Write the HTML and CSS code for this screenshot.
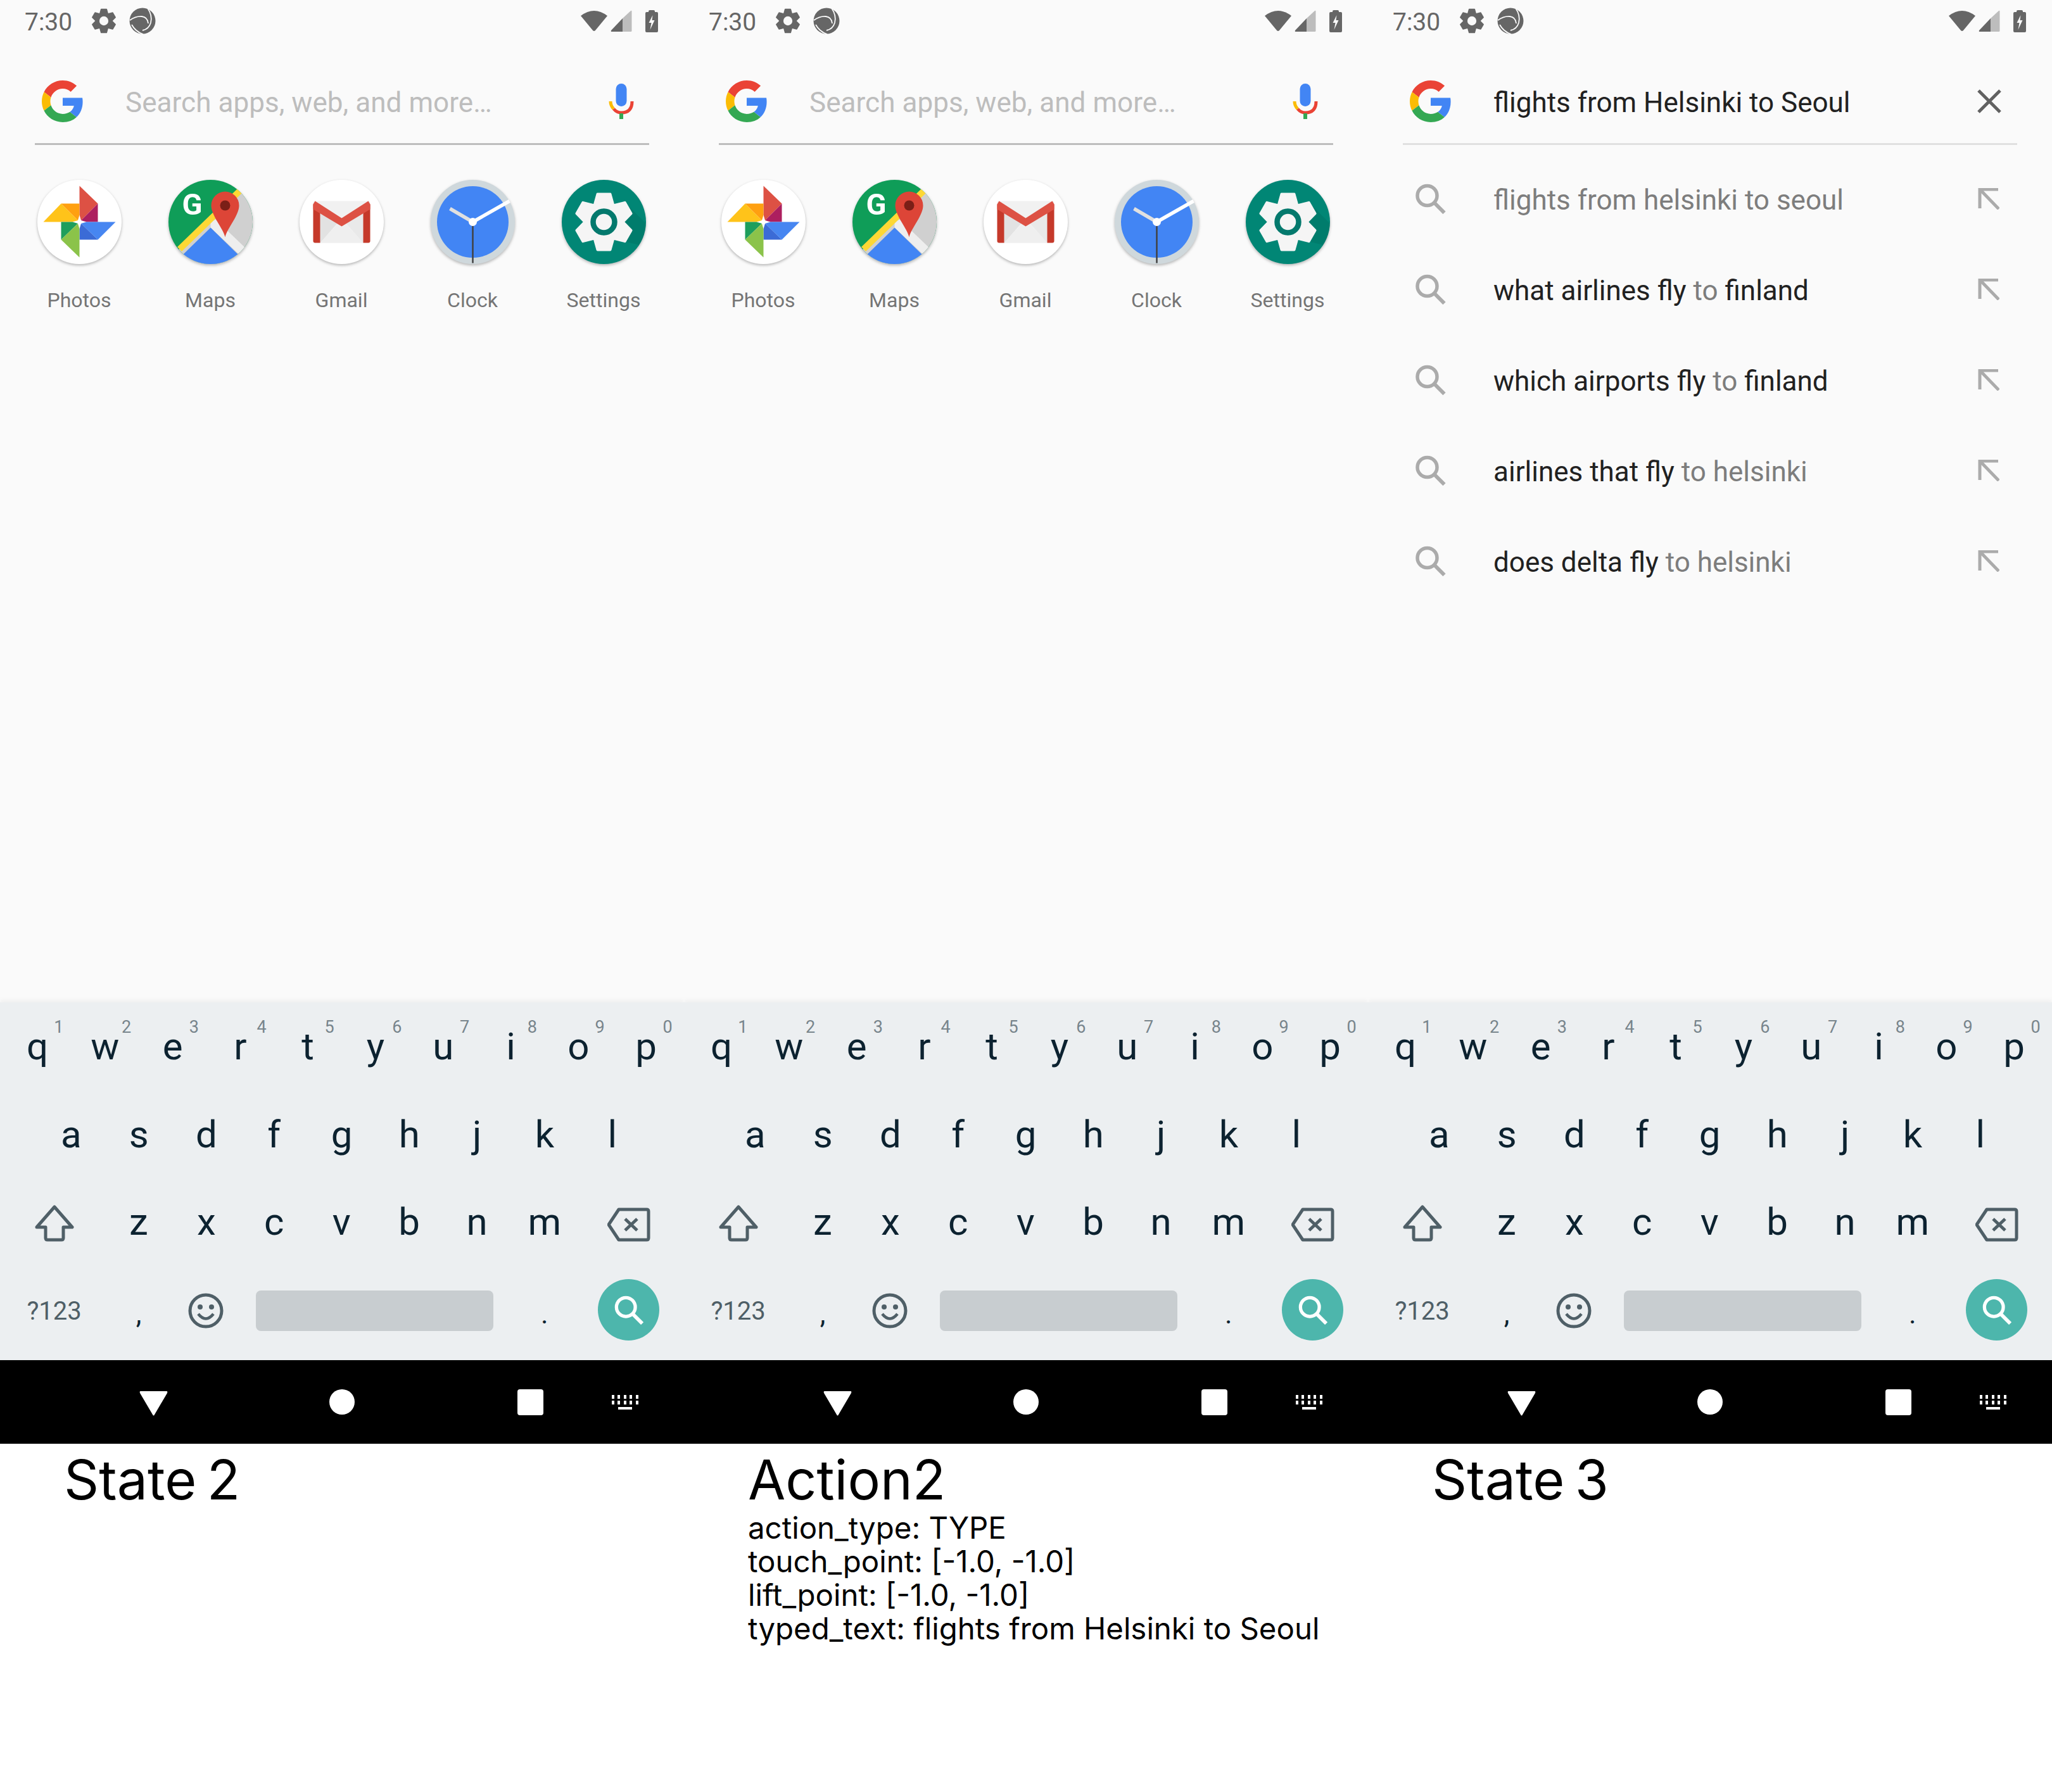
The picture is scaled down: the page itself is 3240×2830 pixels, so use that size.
FILE: index.html
```html
<!DOCTYPE html>
<html lang="en">
<head>
<meta charset="utf-8">
<title>State 2, Action2, State 3</title>
<link rel="stylesheet" href="styles.css">
</head>
<body>
<svg class="sprite" width="0" height="0" aria-hidden="true">
  <defs>
    <clipPath id="clip-app"><circle cx="0" cy="0" r="66.5"/></clipPath>
    <polygon id="tooth" points="-10,-44 10,-44 15,-26 -15,-26"/>
    <symbol id="i-cog" viewBox="-50 -50 100 100">
      <g fill="currentColor" stroke="currentColor" stroke-width="4" stroke-linejoin="round">
        <use href="#tooth"/><use href="#tooth" transform="rotate(60)"/><use href="#tooth" transform="rotate(120)"/><use href="#tooth" transform="rotate(180)"/><use href="#tooth" transform="rotate(240)"/><use href="#tooth" transform="rotate(300)"/>
      </g>
      <circle r="32" fill="currentColor"/>
    </symbol>
    <symbol id="i-google" viewBox="0 0 48 48">
      <path fill="#EA4335" d="M24 9.5c3.54 0 6.71 1.22 9.21 3.6l6.85-6.85C35.9 2.38 30.47 0 24 0 14.62 0 6.51 5.38 2.56 13.22l7.98 6.19C12.43 13.72 17.74 9.5 24 9.5z"/>
      <path fill="#4285F4" d="M46.98 24.55c0-1.57-.15-3.09-.38-4.55H24v9.02h12.94c-.58 2.96-2.26 5.48-4.78 7.18l7.73 6c4.51-4.18 7.09-10.36 7.09-17.65z"/>
      <path fill="#FBBC05" d="M10.53 28.59c-.48-1.45-.76-2.99-.76-4.59s.27-3.14.76-4.59l-7.98-6.19C.92 16.46 0 20.12 0 24c0 3.88.92 7.54 2.56 10.78l7.97-6.19z"/>
      <path fill="#34A853" d="M24 48c6.48 0 11.93-2.13 15.89-5.81l-7.73-6c-2.15 1.45-4.92 2.3-8.16 2.3-6.26 0-11.57-4.22-13.47-9.91l-7.98 6.19C6.51 42.62 14.62 48 24 48z"/>
    </symbol>
    <symbol id="i-status-gear" viewBox="-50 -50 100 100">
      <use href="#i-cog" x="-50" y="-50" width="100" height="100" color="#666666"/>
      <circle r="17" fill="#fafafa"/>
    </symbol>
    <symbol id="i-disc" viewBox="-21 -21 42 42">
      <circle r="20.5" fill="#666666"/>
      <g fill="none" stroke="#fafafa" stroke-width="1.8">
        <path d="M-20 -1 Q-10 -8 -1 -7 Q8 -6 9 4"/>
        <path d="M8 -20 Q16 -9 13 3 Q10 13 0 15"/>
        <path d="M-17 6 Q-11 17 1 21"/>
      </g>
    </symbol>
    <symbol id="i-wifi" viewBox="0 0 44 34"><path fill="#666666" d="M1 9 Q22 -7 43 9 L24 32 Q22 34 20 32 Z"/></symbol>
    <symbol id="i-signal" viewBox="0 0 34 34">
      <path fill="#bdbdbd" d="M19 13 L32 1 Q33.500 0 33.500 2 V33 Q33.500 34 32 34 H19 Z"/>
      <path fill="#666666" d="M19 13 V34 H2 Q0 34 1 32 Z"/>
    </symbol>
    <symbol id="i-battery" viewBox="0 0 20 35">
      <path fill="#666666" d="M5 2 Q5 0 7 0 H13 Q15 0 15 2 V3 H18 Q20 3 20 5 V33 Q20 35 18 35 H2 Q0 35 0 33 V5 Q0 3 2 3 H5 Z"/>
      <path fill="#fafafa" d="M11.500 8 L5.500 20 H9.500 L7.500 31 L14.500 16 H10.500 Z"/>
    </symbol>
    <symbol id="i-mic" viewBox="0 0 40 56">
      <rect x="11.500" y="0" width="17" height="36" rx="8.500" fill="#4285f4"/>
      <path d="M3 28 Q3 35 8 40" fill="none" stroke="#fbbc05" stroke-width="5"/>
      <path d="M8 40 Q13 46 20 46 Q37 46 37 28" fill="none" stroke="#ea4335" stroke-width="5"/>
      <rect x="17" y="47" width="6" height="9" fill="#34a853"/>
    </symbol>
    <symbol id="i-photos" viewBox="-66.500 -66.500 133 133">
      <circle r="66.500" fill="#ffffff"/>
      <polygon points="0,-57 29,-29 0,0" fill="#dd5144"/>
      <polygon points="29,-29 29,0 0,0" fill="#ad1f5f"/>
      <polygon points="-57,0 -29,-29 0,0" fill="#ffc31a"/>
      <polygon points="-29,-29 0,-29 0,0" fill="#ffa010"/>
      <polygon points="0,0 57,0 29,28" fill="#4786f1"/>
      <polygon points="0,0 29,28 0,28" fill="#3b6bd6"/>
      <polygon points="-29,0 0,0 -29,28" fill="#1e9e5c"/>
      <polygon points="0,0 0,56 -29,28" fill="#8bc34a"/>
      <polygon points="0,-11 2.500,-2.500 11,0 2.500,2.500 0,11 -2.500,2.500 -11,0 -2.500,-2.500" fill="#ffffff"/>
    </symbol>
    <symbol id="i-maps" viewBox="-66.500 -66.500 133 133">
      <g clip-path="url(#clip-app)">
        <rect x="-70" y="-70" width="140" height="140" fill="#0f9d58"/>
        <polygon points="-52,45 50,-52 70,-52 70,70 -52,70" fill="#d0d0d0"/>
        <polygon points="0,0 0,9 49,55 58,44 8,-4" fill="#eeeeee"/>
        <polygon points="0,9 43,51 43,70 -50,70 -43,51" fill="#4285f4"/>
        <path d="M-49 43 L47 -50" stroke="#fdd835" stroke-width="10" fill="none"/>
      </g>
      <text class="maps-g" x="-29" y="-11.500" text-anchor="middle">G</text>
      <path fill="#dd4537" d="M23 24 C20 10 1 -10 1 -26 A22 22 0 1 1 45 -26 C45 -10 26 10 23 24Z"/>
      <circle cx="23" cy="-26" r="8" fill="#7b1f17"/>
    </symbol>
    <symbol id="i-gmail" viewBox="-66.500 -66.500 133 133">
      <circle r="66.500" fill="#ffffff"/>
      <rect x="-45" y="-33" width="90" height="66" rx="3" fill="#f1f1f1"/>
      <polygon points="-34,-18 -34,33 0,-6" fill="#e2e2e2"/>
      <polygon points="34,-18 34,33 0,-6" fill="#e9e9e9"/>
      <polygon points="-34,33 0,-2 34,33" fill="#efefef"/>
      <path fill="#c5392a" d="M-45 -28 L-34 -20 V33 H-42 Q-45 33 -45 30 Z"/>
      <path fill="#c5392a" d="M45 -28 L34 -20 V33 H42 Q45 33 45 30 Z"/>
      <polygon points="-42,-33 0,-6 42,-33 45,-28 45,-20 0,7 -45,-20 -45,-28" fill="#dd5144"/>
    </symbol>
    <symbol id="i-clock" viewBox="-66.500 -66.500 133 133">
      <circle r="66.500" fill="#cfd8dc"/>
      <circle r="56.500" fill="#4285f4"/>
      <path d="M0 0 L-36 -21" stroke="#e0e0e0" stroke-width="5.500"/>
      <path d="M0 0 L58 -33" stroke="#ffffff" stroke-width="5.500"/>
      <path d="M0 0 V65" stroke="#424242" stroke-width="2.500"/>
      <circle r="6.500" fill="#ffffff"/>
    </symbol>
    <symbol id="i-settings" viewBox="-66.500 -66.500 133 133">
      <circle r="66.500" fill="#018675"/>
      <g clip-path="url(#clip-app)"><polygon points="36,-28 70,6 70,40 30,30" fill="#00000012"/></g>
      <use href="#i-cog" x="-50" y="-50" width="100" height="100" color="#f5f5f5"/>
      <circle r="17" fill="#f5f5f5" stroke="#04796d" stroke-width="8.500"/>
    </symbol>
    <symbol id="i-glass" viewBox="0 0 48 48">
      <circle cx="19" cy="19" r="15.500" fill="none" stroke="currentColor" stroke-width="5.500"/>
      <path d="M30 30 L46 46" fill="none" stroke="currentColor" stroke-width="6"/>
    </symbol>
    <symbol id="i-arrow" viewBox="0 0 34 34">
      <path d="M32 2 H3 V32 M3 2 L33 33" fill="none" stroke="#ababab" stroke-width="5"/>
    </symbol>
    <symbol id="i-close" viewBox="0 0 38 38">
      <path d="M2 2 L36 36 M36 2 L2 36" fill="none" stroke="#616161" stroke-width="5"/>
    </symbol>
    <symbol id="i-shift" viewBox="0 0 62 58">
      <path d="M31 3 L59 35 H45 V52 Q45 55 42 55 H20 Q17 55 17 52 V35 H3 Z" fill="none" stroke="#4f5f67" stroke-width="5" stroke-linejoin="round"/>
    </symbol>
    <symbol id="i-back" viewBox="0 0 68 54">
      <path d="M2 27 L18 3 H62 Q65 3 65 6 V48 Q65 51 62 51 H18 Z" fill="none" stroke="#4f5f67" stroke-width="5" stroke-linejoin="round"/>
      <path d="M28 18 L47 36 M47 18 L28 36" fill="none" stroke="#4f5f67" stroke-width="5"/>
    </symbol>
    <symbol id="i-emoji" viewBox="0 0 56 56">
      <circle cx="28" cy="28" r="25" fill="none" stroke="#4f5f67" stroke-width="5"/>
      <circle cx="19" cy="22" r="4" fill="#4f5f67"/><circle cx="37" cy="22" r="4" fill="#4f5f67"/>
      <path d="M16 33 Q28 48 40 33" fill="none" stroke="#4f5f67" stroke-width="4.500"/>
    </symbol>
    <symbol id="i-nav-back" viewBox="0 0 45 39"><path fill="#ffffff" d="M2 0 H43 Q45 0 44 3 L24 37 Q22.500 40 21 37 L1 3 Q0 0 2 0Z"/></symbol>
    <symbol id="i-nav-keys" viewBox="0 0 42 23">
      <g fill="#ffffff">
        <rect x="0" y="0" width="4" height="6"/><rect x="9" y="0" width="4" height="6"/><rect x="19" y="0" width="4" height="6"/><rect x="28" y="0" width="4" height="6"/><rect x="38" y="0" width="4" height="6"/>
        <rect x="0" y="9" width="4" height="6"/><rect x="9" y="9" width="4" height="6"/><rect x="19" y="9" width="4" height="6"/><rect x="28" y="9" width="4" height="6"/><rect x="38" y="9" width="4" height="6"/>
        <rect x="10" y="19" width="22" height="4"/>
      </g>
    </symbol>
  </defs>
</svg>

<main class="board">

<section class="col">
  <div class="phone">
    <header class="status">
      <span class="time">7:30</span>
      <svg class="st-gear"><use href="#i-status-gear"/></svg>
      <svg class="st-disc"><use href="#i-disc"/></svg>
      <span class="grow"></span>
      <svg class="st-wifi"><use href="#i-wifi"/></svg>
      <svg class="st-signal"><use href="#i-signal"/></svg>
      <svg class="st-batt"><use href="#i-battery"/></svg>
    </header>
    <div class="search">
      <svg class="g-logo"><use href="#i-google"/></svg>
      <span class="placeholder grow">Search apps, web, and more…</span>
      <svg class="mic"><use href="#i-mic"/></svg>
    </div>
    <div class="apps">
      <div class="app"><svg class="app-icon"><use href="#i-photos"/></svg><span class="app-name">Photos</span></div>
      <div class="app"><svg class="app-icon"><use href="#i-maps"/></svg><span class="app-name">Maps</span></div>
      <div class="app"><svg class="app-icon"><use href="#i-gmail"/></svg><span class="app-name">Gmail</span></div>
      <div class="app"><svg class="app-icon"><use href="#i-clock"/></svg><span class="app-name">Clock</span></div>
      <div class="app"><svg class="app-icon"><use href="#i-settings"/></svg><span class="app-name">Settings</span></div>
    </div>
    <div class="grow"></div>
    <div class="keyboard">
      <div class="row">
        <span class="key">q<i class="num">1</i></span><span class="key">w<i class="num">2</i></span><span class="key">e<i class="num">3</i></span><span class="key">r<i class="num">4</i></span><span class="key">t<i class="num">5</i></span><span class="key">y<i class="num">6</i></span><span class="key">u<i class="num">7</i></span><span class="key">i<i class="num">8</i></span><span class="key">o<i class="num">9</i></span><span class="key">p<i class="num">0</i></span>
      </div>
      <div class="row row-home">
        <span class="key">a</span><span class="key">s</span><span class="key">d</span><span class="key">f</span><span class="key">g</span><span class="key">h</span><span class="key">j</span><span class="key">k</span><span class="key">l</span>
      </div>
      <div class="row">
        <span class="key key-wide"><svg class="k-shift"><use href="#i-shift"/></svg></span>
        <span class="key">z</span><span class="key">x</span><span class="key">c</span><span class="key">v</span><span class="key">b</span><span class="key">n</span><span class="key">m</span>
        <span class="key key-wide"><svg class="k-back"><use href="#i-back"/></svg></span>
      </div>
      <div class="row row-bottom">
        <span class="key key-wide key-sym">?123</span>
        <span class="key key-punct">,</span>
        <span class="key"><svg class="k-emoji"><use href="#i-emoji"/></svg></span>
        <span class="key key-space"><span class="spacebar"></span></span>
        <span class="key key-punct">.</span>
        <span class="key key-wide"><span class="k-go"><svg class="k-go-glass"><use href="#i-glass"/></svg></span></span>
      </div>
    </div>
    <nav class="navbar">
      <svg class="n-back"><use href="#i-nav-back"/></svg>
      <span class="n-home"></span>
      <span class="n-recent"></span>
      <svg class="n-keys"><use href="#i-nav-keys"/></svg>
    </nav>
  </div>
  <div class="caption"><h2 class="cap-title">State 2</h2></div>
</section>

<section class="col">
  <div class="phone">
    <header class="status">
      <span class="time">7:30</span>
      <svg class="st-gear"><use href="#i-status-gear"/></svg>
      <svg class="st-disc"><use href="#i-disc"/></svg>
      <span class="grow"></span>
      <svg class="st-wifi"><use href="#i-wifi"/></svg>
      <svg class="st-signal"><use href="#i-signal"/></svg>
      <svg class="st-batt"><use href="#i-battery"/></svg>
    </header>
    <div class="search">
      <svg class="g-logo"><use href="#i-google"/></svg>
      <span class="placeholder grow">Search apps, web, and more…</span>
      <svg class="mic"><use href="#i-mic"/></svg>
    </div>
    <div class="apps">
      <div class="app"><svg class="app-icon"><use href="#i-photos"/></svg><span class="app-name">Photos</span></div>
      <div class="app"><svg class="app-icon"><use href="#i-maps"/></svg><span class="app-name">Maps</span></div>
      <div class="app"><svg class="app-icon"><use href="#i-gmail"/></svg><span class="app-name">Gmail</span></div>
      <div class="app"><svg class="app-icon"><use href="#i-clock"/></svg><span class="app-name">Clock</span></div>
      <div class="app"><svg class="app-icon"><use href="#i-settings"/></svg><span class="app-name">Settings</span></div>
    </div>
    <div class="grow"></div>
    <div class="keyboard">
      <div class="row">
        <span class="key">q<i class="num">1</i></span><span class="key">w<i class="num">2</i></span><span class="key">e<i class="num">3</i></span><span class="key">r<i class="num">4</i></span><span class="key">t<i class="num">5</i></span><span class="key">y<i class="num">6</i></span><span class="key">u<i class="num">7</i></span><span class="key">i<i class="num">8</i></span><span class="key">o<i class="num">9</i></span><span class="key">p<i class="num">0</i></span>
      </div>
      <div class="row row-home">
        <span class="key">a</span><span class="key">s</span><span class="key">d</span><span class="key">f</span><span class="key">g</span><span class="key">h</span><span class="key">j</span><span class="key">k</span><span class="key">l</span>
      </div>
      <div class="row">
        <span class="key key-wide"><svg class="k-shift"><use href="#i-shift"/></svg></span>
        <span class="key">z</span><span class="key">x</span><span class="key">c</span><span class="key">v</span><span class="key">b</span><span class="key">n</span><span class="key">m</span>
        <span class="key key-wide"><svg class="k-back"><use href="#i-back"/></svg></span>
      </div>
      <div class="row row-bottom">
        <span class="key key-wide key-sym">?123</span>
        <span class="key key-punct">,</span>
        <span class="key"><svg class="k-emoji"><use href="#i-emoji"/></svg></span>
        <span class="key key-space"><span class="spacebar"></span></span>
        <span class="key key-punct">.</span>
        <span class="key key-wide"><span class="k-go"><svg class="k-go-glass"><use href="#i-glass"/></svg></span></span>
      </div>
    </div>
    <nav class="navbar">
      <svg class="n-back"><use href="#i-nav-back"/></svg>
      <span class="n-home"></span>
      <span class="n-recent"></span>
      <svg class="n-keys"><use href="#i-nav-keys"/></svg>
    </nav>
  </div>
  <div class="caption">
    <h2 class="cap-title">Action2</h2>
    <p class="cap-line">action_type: TYPE</p>
    <p class="cap-line">touch_point: [-1.0, -1.0]</p>
    <p class="cap-line">lift_point: [-1.0, -1.0]</p>
    <p class="cap-line">typed_text: flights from Helsinki to Seoul</p>
  </div>
</section>

<section class="col">
  <div class="phone">
    <header class="status">
      <span class="time">7:30</span>
      <svg class="st-gear"><use href="#i-status-gear"/></svg>
      <svg class="st-disc"><use href="#i-disc"/></svg>
      <span class="grow"></span>
      <svg class="st-wifi"><use href="#i-wifi"/></svg>
      <svg class="st-signal"><use href="#i-signal"/></svg>
      <svg class="st-batt"><use href="#i-battery"/></svg>
    </header>
    <div class="search search-active">
      <svg class="g-logo"><use href="#i-google"/></svg>
      <span class="query grow">flights from Helsinki to Seoul</span>
      <svg class="close"><use href="#i-close"/></svg>
    </div>
    <ul class="suggestions">
      <li class="sug"><svg class="sug-glass"><use href="#i-glass"/></svg><span class="sug-text grow"><span class="dim">flights from helsinki to seoul</span></span><svg class="sug-arrow"><use href="#i-arrow"/></svg></li>
      <li class="sug"><svg class="sug-glass"><use href="#i-glass"/></svg><span class="sug-text grow">what airlines fly <span class="dim">to</span> finland</span><svg class="sug-arrow"><use href="#i-arrow"/></svg></li>
      <li class="sug"><svg class="sug-glass"><use href="#i-glass"/></svg><span class="sug-text grow">which airports fly <span class="dim">to</span> finland</span><svg class="sug-arrow"><use href="#i-arrow"/></svg></li>
      <li class="sug"><svg class="sug-glass"><use href="#i-glass"/></svg><span class="sug-text grow">airlines that fly <span class="dim">to helsinki</span></span><svg class="sug-arrow"><use href="#i-arrow"/></svg></li>
      <li class="sug"><svg class="sug-glass"><use href="#i-glass"/></svg><span class="sug-text grow">does delta fly <span class="dim">to helsinki</span></span><svg class="sug-arrow"><use href="#i-arrow"/></svg></li>
    </ul>
    <div class="grow"></div>
    <div class="keyboard">
      <div class="row">
        <span class="key">q<i class="num">1</i></span><span class="key">w<i class="num">2</i></span><span class="key">e<i class="num">3</i></span><span class="key">r<i class="num">4</i></span><span class="key">t<i class="num">5</i></span><span class="key">y<i class="num">6</i></span><span class="key">u<i class="num">7</i></span><span class="key">i<i class="num">8</i></span><span class="key">o<i class="num">9</i></span><span class="key">p<i class="num">0</i></span>
      </div>
      <div class="row row-home">
        <span class="key">a</span><span class="key">s</span><span class="key">d</span><span class="key">f</span><span class="key">g</span><span class="key">h</span><span class="key">j</span><span class="key">k</span><span class="key">l</span>
      </div>
      <div class="row">
        <span class="key key-wide"><svg class="k-shift"><use href="#i-shift"/></svg></span>
        <span class="key">z</span><span class="key">x</span><span class="key">c</span><span class="key">v</span><span class="key">b</span><span class="key">n</span><span class="key">m</span>
        <span class="key key-wide"><svg class="k-back"><use href="#i-back"/></svg></span>
      </div>
      <div class="row row-bottom">
        <span class="key key-wide key-sym">?123</span>
        <span class="key key-punct">,</span>
        <span class="key"><svg class="k-emoji"><use href="#i-emoji"/></svg></span>
        <span class="key key-space"><span class="spacebar"></span></span>
        <span class="key key-punct">.</span>
        <span class="key key-wide"><span class="k-go"><svg class="k-go-glass"><use href="#i-glass"/></svg></span></span>
      </div>
    </div>
    <nav class="navbar">
      <svg class="n-back"><use href="#i-nav-back"/></svg>
      <span class="n-home"></span>
      <span class="n-recent"></span>
      <svg class="n-keys"><use href="#i-nav-keys"/></svg>
    </nav>
  </div>
  <div class="caption"><h2 class="cap-title">State 3</h2></div>
</section>

</main>
</body>
</html>
```
FILE: styles.css
```css
* { box-sizing: border-box; }
html, body { margin: 0; padding: 0; background: #ffffff; }
body { font-family: Roboto, "Liberation Sans", sans-serif; width: 3240px; height: 2830px; overflow: hidden; }
.sprite { position: absolute; }
.maps-g { font-family: Roboto, sans-serif; font-weight: 700; font-size: 47px; fill: #ffffff; }
.board { display: flex; width: 3240px; }
.col { width: 1080px; display: flex; flex-direction: column; }
.phone { height: 2280px; background: #fafafa; display: flex; flex-direction: column; }
.grow { flex: 1 1 auto; }

/* status bar */
.status { height: 66px; display: flex; align-items: center; padding: 0 41px 0 39px; }
.time { font-size: 39px; line-height: 66px; padding-top: 4px; color: #666666; width: 104px; }
.st-gear { width: 42px; height: 42px; margin-right: 19px; color: #666666; }
.st-disc { width: 42px; height: 42px; }
.st-wifi { width: 44px; height: 34px; margin-right: 4px; }
.st-signal { width: 34px; height: 34px; margin-right: 21px; }
.st-batt { width: 20px; height: 35px; }

/* search box */
.search { margin: 0 55px; height: 163px; padding: 61px 24px 33px 11px; display: flex; align-items: center; border-bottom: 3px solid #bdbdbd; }
.search-active { border-bottom-color: #e0e0e0; }
.g-logo { width: 66px; height: 66px; margin-right: 66px; flex: none; }
.placeholder { font-size: 44px; color: #bdbdbd; padding-top: 4px; letter-spacing: 0.05px; }
.query { font-size: 44px; color: #212121; padding-top: 4px; }
.mic { width: 40px; height: 56px; flex: none; }
.close { width: 38px; height: 38px; flex: none; margin-right: 1px; }

/* launcher apps */
.apps { display: flex; padding: 55px 0 0 21.500px; }
.app { width: 207px; display: flex; flex-direction: column; align-items: center; }
.app-icon { width: 133px; height: 133px; filter: drop-shadow(0 2px 2px rgba(0,0,0,.28)); }
.app-name { font-size: 32px; line-height: 40px; margin-top: 37px; color: #757575; }

/* suggestions */
.suggestions { list-style: none; margin: 13px 0 0; padding: 0 83px 0 74px; }
.sug { height: 143px; display: flex; align-items: center; }
.sug-glass { width: 49px; height: 48px; margin-right: 75px; color: #ababab; flex: none; }
.sug-text { font-size: 44px; color: #212121; padding-top: 4px; }
.dim { color: #7d7d7d; }
.sug-arrow { width: 34px; height: 34px; flex: none; }

/* keyboard */
.keyboard { height: 565px; background: #eceff1; padding: 0.500px 5px 0 5.600px; box-shadow: 0 -3px 8px rgba(0,0,0,.05); clip-path: inset(-12px 0 0 0); color: #0c2230; }
.row { height: 138.500px; display: flex; }
.row-home { padding-left: 53.400px; }
.row-bottom { margin-top: 2px; }
.key { position: relative; flex: 0 0 106.800px; display: flex; align-items: center; justify-content: center; font-size: 60px; }
.key-wide { flex-basis: 160px; }
.key-space { flex-basis: 427.200px; }
.key-sym { font-size: 40px; color: #4f5f67; }
.key-punct { font-size: 44px; padding-top: 10px; }
.num { position: absolute; top: 22px; right: 12px; font-style: normal; font-size: 27px; line-height: 32px; color: #78858c; }
.spacebar { width: 375px; height: 64px; margin-left: -2px; background: #c8cdd0; border-radius: 8px; }
.k-shift { width: 62px; height: 58px; margin-top: 5px; }
.k-back { width: 68px; height: 54px; margin-top: 8px; margin-left: -1px; }
.k-emoji { width: 56px; height: 56px; margin-left: -1px; }
.k-go { width: 97px; height: 97px; border-radius: 50%; background: #4db6ac; display: flex; align-items: center; justify-content: center; margin-top: -3px; margin-left: -1px; }
.k-go-glass { width: 46px; height: 46px; color: #ffffff; }

/* nav bar */
.navbar { height: 132px; background: #000000; display: flex; align-items: center; padding-left: 220px; }
.n-back { width: 45px; height: 39px; margin-top: 5px; }
.n-home { width: 40px; height: 40px; border-radius: 50%; background: #ffffff; margin-left: 255px; }
.n-recent { width: 41px; height: 41px; border-radius: 4px; background: #ffffff; margin-left: 257px; }
.n-keys { width: 42px; height: 23px; margin-left: 108px; }

/* captions */
.caption { padding: 8px 0 0 101px; color: #000000; font-family: Inter, Roboto, sans-serif; }
.cap-title { margin: 0; font-weight: 400; font-size: 86px; line-height: 98px; word-spacing: -8px; }
.cap-line { margin: 0; font-size: 47.400px; line-height: 53px; white-space: nowrap; }
```
